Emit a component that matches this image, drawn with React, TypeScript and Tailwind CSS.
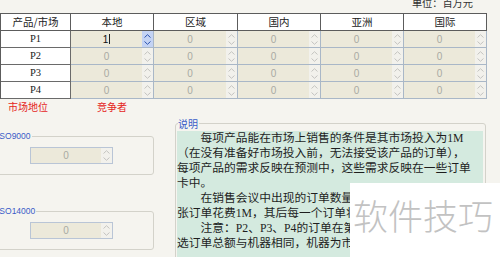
import React from 'react';

const cjk = '"Noto Sans CJK SC", "Liberation Sans", sans-serif';
const serifCjk = '"Liberation Serif", "Noto Sans CJK SC", serif';

const markets = ['本地', '区域', '国内', '亚洲', '国际'];
const products = ['P1', 'P2', 'P3', 'P4'];

const Chevron = ({ up, color }: { up: boolean; color: string }) => (
    <svg width="7" height="4" viewBox="0 0 7 4" className="block">
        <path
            d={up ? 'M0.5 3.5L3.5 0.7L6.5 3.5' : 'M0.5 0.5L3.5 3.3L6.5 0.5'}
            fill="none"
            stroke={color}
            strokeWidth="1"
        />
    </svg>
);

const SpinBox = ({ value = '0', active = false, className = '' }: { value?: string; active?: boolean; className?: string }) => (
    <div className={`flex bg-[#ece9da] ${className}`}>
        <div
            className={`flex-1 flex items-center justify-center text-[10px] ${active ? 'text-[#111]' : 'text-[#a9a9a3]'}`}
            style={{ fontFamily: '"Liberation Sans", sans-serif' }}
        >
            {value}
            {active && <span className="ml-px w-px h-[10px] bg-[#222]" />}
        </div>
        <div
            className={`w-[11px] flex flex-col items-center justify-center gap-[3px] ${active ? 'bg-[#c4d3f4]' : 'bg-[#f2f1ec]'}`}
        >
            <Chevron up color={active ? '#2d55b0' : '#c4c4c0'} />
            <Chevron up={false} color={active ? '#2d55b0' : '#c4c4c0'} />
        </div>
    </div>
);

export default function App() {
    return (
        <div
            className="w-[500px] h-[257px] overflow-hidden bg-[#f5f4ef] relative text-[#222]"
            style={{ fontFamily: cjk }}
        >
            {/* unit line, cut at the top */}
            <div className="h-[13px] flex justify-end pr-[27px] overflow-hidden">
                <span className="text-[10.2px] leading-[10px] -mt-[2px] text-[#333]">单位：百万元</span>
            </div>

            {/* market input table */}
            <div className="grid grid-cols-[70px_83px_84px_83px_83px_83px] w-[487px] border-t border-l border-[#5c5c5c]">
                <div className="h-[17px] border-r border-b border-[#5c5c5c] bg-white flex items-center justify-center text-[10.5px]">
                    产品/市场
                </div>
                {markets.map((m) => (
                    <div
                        key={m}
                        className="h-[17px] border-r border-b border-[#5c5c5c] bg-white flex items-center justify-center text-[10.5px]"
                    >
                        {m}
                    </div>
                ))}
                {products.map((p, r) => (
                    <React.Fragment key={p}>
                        <div
                            className="h-[17px] border-r border-b border-[#6a6a6a] bg-white flex items-center justify-center text-[10.5px]"
                            style={{ fontFamily: serifCjk }}
                        >
                            {p}
                        </div>
                        {markets.map((m, c) => (
                            <div key={m} className="h-[17px] border-r border-b border-[#a9b7c7] flex">
                                <SpinBox
                                    className="flex-1"
                                    value={r === 0 && c === 0 ? '1' : '0'}
                                    active={r === 0 && c === 0}
                                />
                            </div>
                        ))}
                    </React.Fragment>
                ))}
            </div>

            <div className="flex">
                {/* left column */}
                <div className="w-[175px] shrink-0">
                    <div className="flex h-[13px] mt-px items-center text-[10px] text-[#e5261d]">
                        <span className="ml-[8px]">市场地位</span>
                        <span className="ml-[49px]">竞争者</span>
                    </div>

                    <fieldset className="-ml-[20px] w-[174px] h-[44px] mt-[18px] border border-[#d3d2ca] rounded-[3px]">
                        <legend
                            className="ml-[16px] pr-px text-[8.5px] leading-[11px] text-[#3a5cc8]"
                            style={{ fontFamily: '"Liberation Sans", sans-serif' }}
                        >
                            ISO9000
                        </legend>
                        <SpinBox className="ml-[49px] mt-[5px] w-[83px] h-[17px] border border-[#b9c5d6]" />
                    </fieldset>

                    <fieldset className="-ml-[20px] w-[174px] h-[44px] mt-[31px] border border-[#d3d2ca] rounded-[3px]">
                        <legend
                            className="ml-[16px] pr-px text-[8.5px] leading-[11px] text-[#3a5cc8]"
                            style={{ fontFamily: '"Liberation Sans", sans-serif' }}
                        >
                            ISO14000
                        </legend>
                        <SpinBox className="ml-[49px] mt-[5px] w-[83px] h-[17px] border border-[#b9c5d6]" />
                    </fieldset>
                </div>

                {/* explanation */}
                <fieldset className="w-[311px] h-[160px] mt-[19px] border border-[#d3d2ca] rounded-[3px]">
                    <legend className="ml-[2px] pr-px text-[10px] leading-[11px] text-[#3a5cc8]">说明</legend>
                    <div
                        className="ml-[1px] mt-[2px] w-[306px] h-[140px] bg-[#d4eadf] overflow-hidden whitespace-nowrap text-[11.75px] leading-[15px] text-[#1e1e1e]"
                        style={{ fontFamily: serifCjk }}
                    >
                        <div>　　每项产品能在市场上销售的条件是其市场投入为1M</div>
                        <div>（在没有准备好市场投入前，无法接受该产品的订单），</div>
                        <div>每项产品的需求反映在预测中，这些需求反映在一些订单</div>
                        <div>卡中。</div>
                        <div>　　在销售会议中出现的订单数量</div>
                        <div>张订单花费1M，其后每一个订单将</div>
                        <div>　　注意：P2、P3、P4的订单在第</div>
                        <div>选订单总额与机器相同，机器为市</div>
                    </div>
                </fieldset>
            </div>

            {/* watermark */}
            <div className="absolute left-[350px] top-[183px] right-0 bottom-0 bg-white pl-[3px] pt-[12px]">
                <span className="text-[35px] leading-[40px] text-[#c2c2c2] font-light">软件技巧</span>
            </div>
        </div>
    );
}
